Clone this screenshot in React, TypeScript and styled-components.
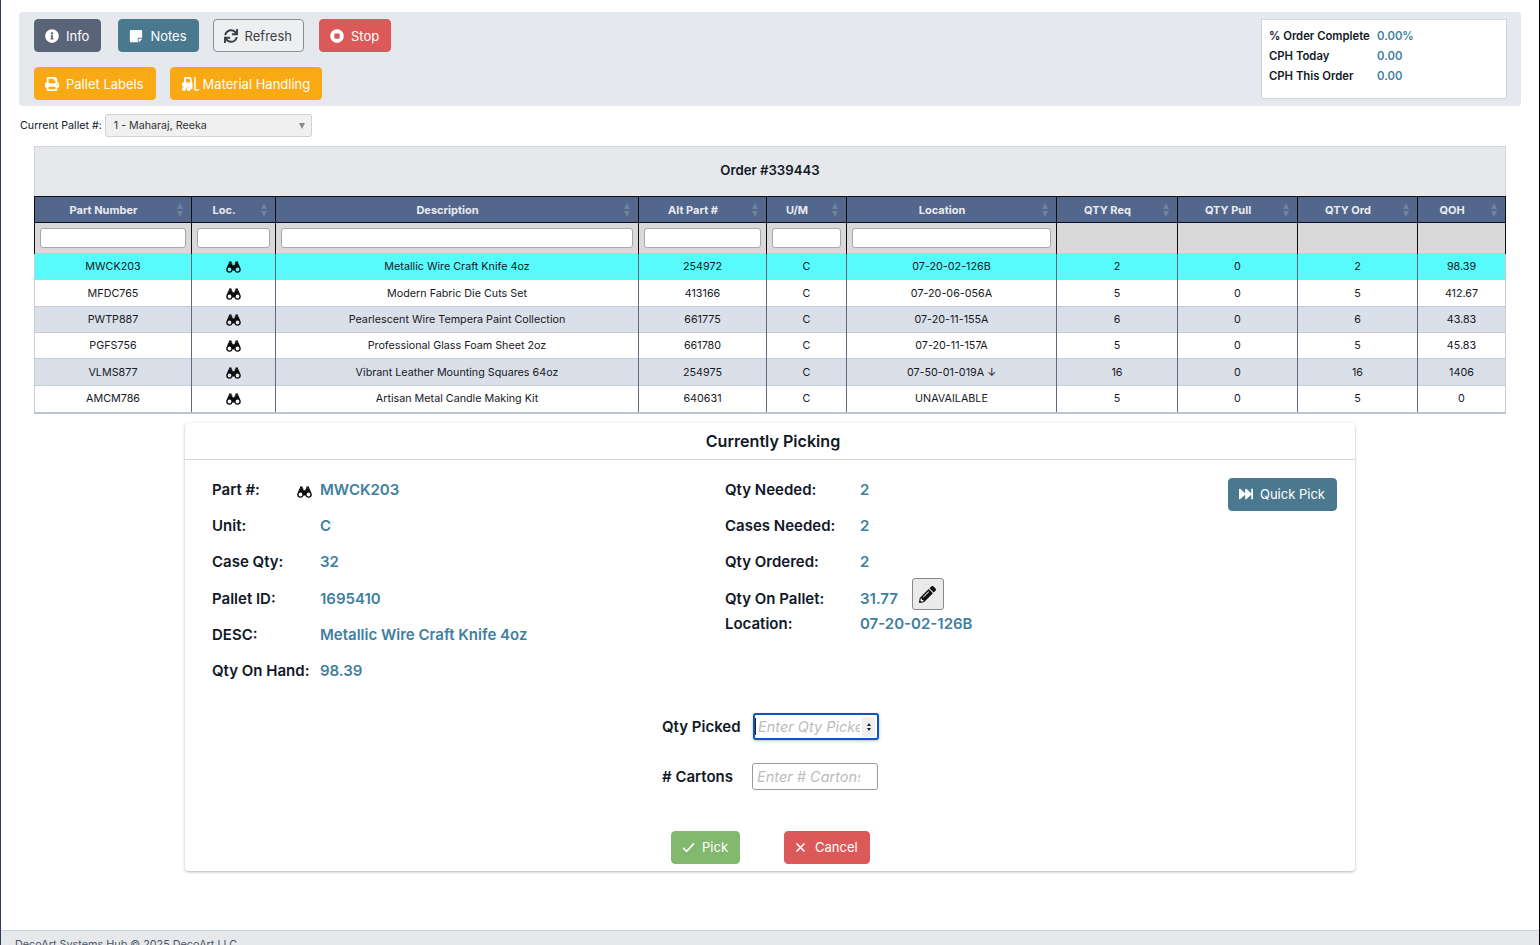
import React from 'react';
import styled, { createGlobalStyle } from 'styled-components';
import {
  FaFastForward,
  FaInfoCircle,
  FaPencilAlt,
  FaPrint,
  FaStickyNote,
  FaStopCircle,
  FaSync,
} from 'react-icons/fa';

const GlobalStyle = createGlobalStyle`
  html, body {
    margin: 0;
    padding: 0;
    height: 945px;
    overflow: hidden;
    background: #fff;
    font-family: Inter, "Liberation Sans", sans-serif;
    color: #111827;
  }
`;

const Page = styled.div`
  height: 945px;
  box-sizing: border-box;
  border-left: 1px solid #2d3a5a;
  border-right: 1px solid #000;
  display: flex;
  flex-direction: column;
  overflow: hidden;
`;

const Main = styled.div`
  flex: 1;
  padding: 12px 18px 0 18px;
`;

const Toolbar = styled.div`
  height: 94px;
  box-sizing: border-box;
  background: #e5e8ed;
  border-radius: 4px;
  padding: 7px 14px 0 15px;
  display: flex;
  justify-content: space-between;
`;

const ButtonRows = styled.div`
  display: flex;
  flex-direction: column;
  gap: 15px;
`;

const ButtonRow = styled.div`
  display: flex;
  gap: 14px;
`;

const colors = {
  slate: { bg: '#5a6478', fg: '#fff', border: '#5a6478' },
  teal: { bg: '#4a788f', fg: '#fff', border: '#4a788f' },
  plain: { bg: '#eeeff1', fg: '#3c3f45', border: '#8b8f96' },
  red: { bg: '#db5a59', fg: '#fff', border: '#db5a59' },
  amber: { bg: '#f9a914', fg: '#fff', border: '#f9a914' },
  green: { bg: '#83b96f', fg: '#fff', border: '#83b96f' },
};

const Button = styled.button<{ $kind: keyof typeof colors; $gap?: number; $after?: number }>`
  height: 33px;
  box-sizing: border-box;
  padding: 0 11px 0 10px;
  margin-right: ${(p) => p.$after ?? 0}px;
  display: inline-flex;
  align-items: center;
  gap: ${(p) => p.$gap ?? 7}px;
  border-radius: 4px;
  border: 1px solid ${(p) => colors[p.$kind].border};
  background: ${(p) => colors[p.$kind].bg};
  color: ${(p) => colors[p.$kind].fg};
  font-family: inherit;
  font-size: 13px;
  font-weight: 400;
  white-space: nowrap;
  svg {
    flex: none;
  }
`;

const StatsBox = styled.div`
  width: 246px;
  height: 80px;
  box-sizing: border-box;
  background: #fff;
  border: 1px solid #d3d7dd;
  padding: 6px 7px;
`;

const StatRow = styled.div`
  display: flex;
  height: 20px;
  align-items: center;
  font-size: 11.3px;
  font-weight: 600;
`;

const StatLabel = styled.div`
  width: 108px;
  color: #111827;
`;

const StatValue = styled.div`
  color: #40809f;
`;

const PalletRow = styled.div`
  display: flex;
  align-items: center;
  gap: 3px;
  height: 22px;
  margin-top: 8px;
  padding-left: 1px;
  font-size: 10.7px;
`;

const PalletSelect = styled.div`
  width: 207px;
  height: 23px;
  box-sizing: border-box;
  border: 1px solid #ced2d8;
  border-radius: 3px;
  background: #f0f0f1;
  padding: 1px 6px 0 8px;
  display: flex;
  align-items: center;
  justify-content: space-between;
  color: #333;
  font-size: 10.7px;
`;

const SelectCaret = styled.span`
  width: 0;
  height: 0;
  border-left: 3px solid transparent;
  border-right: 3px solid transparent;
  border-top: 6px solid #8a8a8a;
`;

const TableWrap = styled.div`
  margin: 10px 15px 0 15px;
  border-bottom: 2px solid #bcc3cf;
`;

const TableTitle = styled.div`
  height: 50px;
  box-sizing: border-box;
  padding-bottom: 3px;
  background: #e7e8ec;
  border: 1px solid #d3d6db;
  border-bottom: none;
  display: flex;
  align-items: center;
  justify-content: center;
  font-size: 13.2px;
  font-weight: 600;
`;

const Table = styled.table`
  width: 100%;
  border-collapse: collapse;
  table-layout: fixed;
  font-size: 10.75px;
`;

const Th = styled.th`
  position: relative;
  height: 26px;
  padding: 0 19px 0 0;
  box-sizing: border-box;
  background: #53678c;
  border: 1px solid #0c0f16;
  color: #e9ebf0;
  font-size: 11px;
  font-weight: 700;
`;

const SortArrows = styled.span`
  position: absolute;
  right: 8px;
  top: 6px;
  display: flex;
  flex-direction: column;
  gap: 2px;
  &::before,
  &::after {
    content: '';
    width: 0;
    height: 0;
    border-left: 3.5px solid transparent;
    border-right: 3.5px solid transparent;
  }
  &::before {
    border-bottom: 6px solid #71829f;
  }
  &::after {
    border-top: 6px solid #71829f;
  }
`;

const FilterCell = styled.td`
  height: 31px;
  padding: 0 5px;
  box-sizing: border-box;
  background: #d9d9d9;
  border-left: 1px solid #0c0f16;
  border-right: 1px solid #0c0f16;
`;

const FilterInput = styled.input`
  display: block;
  width: 100%;
  height: 20px;
  box-sizing: border-box;
  background: #fff;
  border: 1px solid #a7a7a7;
  border-radius: 3px;
  outline: none;
`;

const Row = styled.tr<{ $tone: 'active' | 'white' | 'band' }>`
  height: 26px;
  background: ${(p) =>
    p.$tone === 'active' ? '#57fbfb' : p.$tone === 'band' ? '#dae0ea' : '#fff'};
  &:nth-child(3n + 2) {
    height: 27px;
  }
`;

const Td = styled.td`
  padding: 0;
  text-align: center;
  color: #16191f;
  border-left: 1px solid #5d6b7c;
  border-right: 1px solid #5d6b7c;
  border-top: 1px solid #c6ccd6;
  &:first-child {
    border-left-color: #c9ced6;
  }
  &:last-child {
    border-right-color: #c9ced6;
  }
  svg {
    display: block;
    margin: 1px auto 0;
  }
`;

const Card = styled.div`
  width: 1170px;
  height: 448px;
  box-sizing: border-box;
  margin: 9px auto 0;
  background: #fff;
  border-radius: 4px;
  box-shadow: 0 1px 3px rgba(0, 0, 0, 0.3);
`;

const CardTitle = styled.div`
  height: 37px;
  box-sizing: border-box;
  padding: 1px 0 0 6px;
  border-bottom: 1px solid #d3d6db;
  display: flex;
  align-items: center;
  justify-content: center;
  font-size: 16.1px;
  font-weight: 600;
  color: #111827;
`;

const CardBody = styled.div`
  padding: 12px 18px 0 27px;
  display: flex;
  height: 250px;
  box-sizing: border-box;
`;

const Column = styled.div<{ $width: number }>`
  width: ${(p) => p.$width}px;
  display: flex;
  flex-direction: column;
`;

const Field = styled.div<{ $height?: number }>`
  display: flex;
  align-items: center;
  height: ${(p) => p.$height ?? 36.2}px;
  font-size: 15px;
  font-weight: 600;
`;

const FieldLabel = styled.div<{ $width: number }>`
  width: ${(p) => p.$width}px;
  flex: none;
  position: relative;
  color: #111827;
`;

const LabelIcon = styled.span`
  position: absolute;
  right: 8px;
  top: 3px;
  color: #111;
`;

const FieldValue = styled.div`
  color: #40809f;
`;

const EditButton = styled.button`
  width: 32px;
  height: 32px;
  margin: -8px 0 0 14px;
  padding: 0;
  display: inline-flex;
  align-items: center;
  justify-content: center;
  border: 1px solid #8b8b8b;
  border-radius: 3px;
  background: #eaeaea;
  color: #111;
`;

const QuickColumn = styled.div`
  flex: 1;
  display: flex;
  justify-content: flex-end;
  align-items: flex-start;
  padding-top: 6px;
`;

const PickForm = styled.div`
  display: flex;
  flex-direction: column;
  gap: 22px;
  margin-left: 477px;
  margin-top: 3px;
`;

const PickRow = styled.div`
  display: flex;
  align-items: center;
  height: 28px;
`;

const PickLabel = styled.label`
  width: 90px;
  font-size: 15px;
  font-weight: 600;
  color: #111827;
`;

const PickInput = styled.div<{ $focused?: boolean }>`
  position: relative;
  width: 126px;
  height: 27px;
  box-sizing: border-box;
  margin-left: ${(p) => (p.$focused ? 1 : 0)}px;
  padding: ${(p) => (p.$focused ? '0 17px 0 0' : '0 17px 0 4px')};
  display: flex;
  align-items: center;
  background: #fff;
  border-radius: 3px;
  border: ${(p) => (p.$focused ? '2px solid #0a55c4' : '1px solid #9a9a9a')};
  box-shadow: ${(p) => (p.$focused ? '0 1px 3px rgba(0,0,0,0.25)' : 'none')};
`;

const Placeholder = styled.span`
  flex: 1;
  overflow: hidden;
  font-size: 14.5px;
  font-style: italic;
  color: #bcbcbc;
  white-space: nowrap;
`;

const Caret = styled.span`
  flex: none;
  width: 1px;
  height: 17px;
  margin-right: 2px;
  background: #222;
`;

const Spinner = styled.span`
  position: absolute;
  right: 2px;
  top: 2px;
  bottom: 1px;
  width: 13px;
  background: #efefef;
  display: flex;
  flex-direction: column;
  align-items: center;
  justify-content: center;
  gap: 2px;
  &::before,
  &::after {
    content: '';
    width: 0;
    height: 0;
    border-left: 2.5px solid transparent;
    border-right: 2.5px solid transparent;
  }
  &::before {
    border-bottom: 3px solid #222;
  }
  &::after {
    border-top: 3px solid #222;
  }
`;

const PickActions = styled.div`
  display: flex;
  gap: 44px;
  margin: 40px 0 0 486px;
`;

const Footer = styled.div`
  height: 15px;
  flex: none;
  box-sizing: border-box;
  background: #e7e8ec;
  border-top: 1px solid #cfd3d9;
  padding: 7px 0 0 14px;
  font-size: 10.8px;
  line-height: 14px;
  color: #4b5563;
  white-space: nowrap;
`;

const columns = [
  { name: 'Part Number', width: 157, filter: true },
  { name: 'Loc.', width: 84, filter: true },
  { name: 'Description', width: 363, filter: true },
  { name: 'Alt Part #', width: 128, filter: true },
  { name: 'U/M', width: 80, filter: true },
  { name: 'Location', width: 210, filter: true },
  { name: 'QTY Req', width: 121, filter: false },
  { name: 'QTY Pull', width: 120, filter: false },
  { name: 'QTY Ord', width: 120, filter: false },
  { name: 'QOH', width: 88, filter: false },
];

const rows = [
  ['MWCK203', 'Metallic Wire Craft Knife 4oz', '254972', 'C', '07-20-02-126B', '2', '0', '2', '98.39'],
  ['MFDC765', 'Modern Fabric Die Cuts Set', '413166', 'C', '07-20-06-056A', '5', '0', '5', '412.67'],
  ['PWTP887', 'Pearlescent Wire Tempera Paint Collection', '661775', 'C', '07-20-11-155A', '6', '0', '6', '43.83'],
  ['PGFS756', 'Professional Glass Foam Sheet 2oz', '661780', 'C', '07-20-11-157A', '5', '0', '5', '45.83'],
  ['VLMS877', 'Vibrant Leather Mounting Squares 64oz', '254975', 'C', '07-50-01-019A ↓', '16', '0', '16', '1406'],
  ['AMCM786', 'Artisan Metal Candle Making Kit', '640631', 'C', 'UNAVAILABLE', '5', '0', '5', '0'],
];

const stats = [
  ['% Order Complete', '0.00%'],
  ['CPH Today', '0.00'],
  ['CPH This Order', '0.00'],
];

const leftFields = [
  ['Unit:', 'C'],
  ['Case Qty:', '32'],
  ['Pallet ID:', '1695410'],
  ['DESC:', 'Metallic Wire Craft Knife 4oz'],
  ['Qty On Hand:', '98.39'],
];

const rightFields = [
  ['Qty Needed:', '2'],
  ['Cases Needed:', '2'],
  ['Qty Ordered:', '2'],
];

const ForkliftIcon = () => (
  <svg width="18" height="16" viewBox="0 0 18 16" fill="currentColor">
    <path
      fillRule="evenodd"
      d="M4 1h5.2c.5 0 .9.3 1 .8l1.3 6.2V13H10.2a2.6 2.6 0 0 0-5-.6H3.9A2.6 2.6 0 0 0 1 10.2V7.7C1 7 1.5 6.5 2.2 6.5H3V2c0-.6.4-1 1-1zm1 1.7v3.8h4.6l-.8-3.8z"
    />
    <circle cx="3" cy="13" r="2" />
    <circle cx="7.8" cy="13" r="2" />
    <path d="M13.2 1h1.5v12.2H18v1.5h-4.8z" />
  </svg>
);

const BinocularsIcon = () => (
  <svg width="15" height="12" viewBox="0 0 15 12" fill="#0b0b0b">
    <path d="M3 .5h2.6v2H3zM9.4.5H12v2H9.4z" />
    <path
      fillRule="evenodd"
      d="M2.6 2.2h3.6l.3 2h2l.3-2h3.6l1.8 4.4c.4.6.6 1.2.6 1.9a3.3 3.3 0 0 1-6.4 1.1H6.6A3.3 3.3 0 0 1 .2 8.5c0-.7.2-1.3.6-1.9zM3.5 6.6a1.9 1.9 0 1 0 0 3.8 1.9 1.9 0 0 0 0-3.8zm8 0a1.9 1.9 0 1 0 0 3.8 1.9 1.9 0 0 0 0-3.8z"
    />
  </svg>
);

const CheckIcon = () => (
  <svg width="13" height="11" viewBox="0 0 13 11" fill="none" stroke="currentColor" strokeWidth="1.6">
    <path d="M1 5.8l3.6 3.6L12 1.4" />
  </svg>
);

const CrossIcon = () => (
  <svg width="11" height="11" viewBox="0 0 11 11" fill="none" stroke="currentColor" strokeWidth="1.6">
    <path d="M1.5 1.5l8 8m0-8l-8 8" />
  </svg>
);

export default function App() {
  return (
    <Page>
      <GlobalStyle />
      <Main>
        <Toolbar>
          <ButtonRows>
            <ButtonRow>
              <Button $kind="slate" $after={3}><FaInfoCircle size={14} /> Info</Button>
              <Button $kind="teal"><FaStickyNote size={14} /> Notes</Button>
              <Button $kind="plain" $after={1}><FaSync size={14} /> Refresh</Button>
              <Button $kind="red"><FaStopCircle size={14} /> Stop</Button>
            </ButtonRow>
            <ButtonRow>
              <Button $kind="amber"><FaPrint size={14} /> Pallet Labels</Button>
              <Button $kind="amber" $gap={4}><ForkliftIcon /> Material Handling</Button>
            </ButtonRow>
          </ButtonRows>
          <StatsBox>
            {stats.map(([label, value]) => (
              <StatRow key={label}>
                <StatLabel>{label}</StatLabel>
                <StatValue>{value}</StatValue>
              </StatRow>
            ))}
          </StatsBox>
        </Toolbar>

        <PalletRow>
          Current Pallet #:
          <PalletSelect>
            1 - Maharaj, Reeka
            <SelectCaret />
          </PalletSelect>
        </PalletRow>

        <TableWrap>
          <TableTitle>Order #339443</TableTitle>
          <Table>
            <colgroup>
              {columns.map((col) => (
                <col key={col.name} style={{ width: col.width }} />
              ))}
            </colgroup>
            <thead>
              <tr>
                {columns.map((col) => (
                  <Th key={col.name}>
                    {col.name}
                    <SortArrows />
                  </Th>
                ))}
              </tr>
              <tr>
                {columns.map((col) => (
                  <FilterCell key={col.name}>
                    {col.filter && <FilterInput />}
                  </FilterCell>
                ))}
              </tr>
            </thead>
            <tbody>
              {rows.map((row, index) => (
                <Row key={row[0]} $tone={index === 0 ? 'active' : index % 2 === 0 ? 'band' : 'white'}>
                  <Td>{row[0]}</Td>
                  <Td><BinocularsIcon /></Td>
                  {row.slice(1).map((cell, cellIndex) => (
                    <Td key={cellIndex}>{cell}</Td>
                  ))}
                </Row>
              ))}
            </tbody>
          </Table>
        </TableWrap>

        <Card>
          <CardTitle>Currently Picking</CardTitle>
          <CardBody>
            <Column $width={513}>
              <Field>
                <FieldLabel $width={108}>
                  Part #:
                  <LabelIcon><BinocularsIcon /></LabelIcon>
                </FieldLabel>
                <FieldValue>MWCK203</FieldValue>
              </Field>
              {leftFields.map(([label, value]) => (
                <Field key={label}>
                  <FieldLabel $width={108}>{label}</FieldLabel>
                  <FieldValue>{value}</FieldValue>
                </Field>
              ))}
            </Column>
            <Column $width={300}>
              {rightFields.map(([label, value]) => (
                <Field key={label}>
                  <FieldLabel $width={135}>{label}</FieldLabel>
                  <FieldValue>{value}</FieldValue>
                </Field>
              ))}
              <Field $height={36}>
                <FieldLabel $width={135}>Qty On Pallet:</FieldLabel>
                <FieldValue>31.77</FieldValue>
                <EditButton><FaPencilAlt size={17} /></EditButton>
              </Field>
              <Field $height={15}>
                <FieldLabel $width={135}>Location:</FieldLabel>
                <FieldValue>07-20-02-126B</FieldValue>
              </Field>
            </Column>
            <QuickColumn>
              <Button $kind="teal"><FaFastForward size={14} /> Quick Pick</Button>
            </QuickColumn>
          </CardBody>
          <PickForm>
            <PickRow>
              <PickLabel>Qty Picked</PickLabel>
              <PickInput $focused>
                <Caret />
                <Placeholder>Enter Qty Picked</Placeholder>
                <Spinner />
              </PickInput>
            </PickRow>
            <PickRow>
              <PickLabel># Cartons</PickLabel>
              <PickInput>
                <Placeholder>Enter # Cartons</Placeholder>
              </PickInput>
            </PickRow>
          </PickForm>
          <PickActions>
            <Button $kind="green" $gap={7}><CheckIcon /> Pick</Button>
            <Button $kind="red" $gap={9}><CrossIcon /> Cancel</Button>
          </PickActions>
        </Card>
      </Main>
      <Footer>DecoArt Systems Hub © 2025 DecoArt LLC</Footer>
    </Page>
  );
}
